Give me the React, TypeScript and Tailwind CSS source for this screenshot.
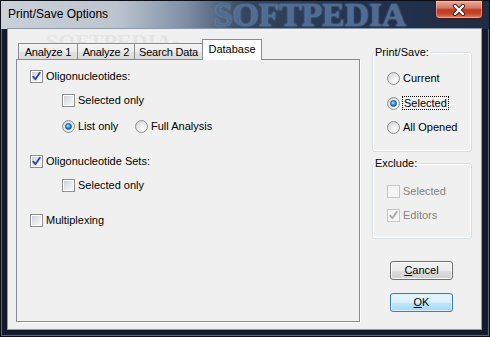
import React from "react";

const font = "font-['Liberation_Sans',Arial,sans-serif]";

function CheckBox({ checked, disabled }: { checked?: boolean; disabled?: boolean }) {
  return (
    <span
      className={
        "relative flex h-[13px] w-[13px] shrink-0 items-center justify-center border " +
        (disabled ? "border-[#c5c5c5] bg-[#f7f7f7]" : "border-[#8e8f8f] bg-white")
      }
    >
      <span
        className={
          "h-[9px] w-[9px] " +
          (disabled
            ? "bg-[#f4f4f4]"
            : "bg-[linear-gradient(135deg,#cdd1d7_0%,#e8e9eb_55%,#f8f8f8_100%)]")
        }
      />
      {checked && (
        <svg className="absolute left-0 top-0" width="11" height="11" viewBox="0 0 11 11">
          <path
            d="M2.2 5.6 L4.4 8.2 L8.8 1.8"
            fill="none"
            stroke={disabled ? "#a8a8a8" : "#2a43a8"}
            strokeWidth="1.8"
            strokeLinecap="round"
            strokeLinejoin="round"
          />
        </svg>
      )}
    </span>
  );
}

function Radio({ checked }: { checked?: boolean }) {
  return (
    <span className="flex h-[13px] w-[13px] shrink-0 items-center justify-center rounded-full border border-[#8e8f8f] bg-[radial-gradient(circle_at_65%_70%,#ffffff_0%,#e6e7e9_50%,#c9ccd1_100%)]">
      {checked && (
        <span className="h-[7px] w-[7px] rounded-full border border-[#1c4f8c] bg-[radial-gradient(circle_at_40%_35%,#bfeaff_0%,#2d96e0_45%,#0d4c97_100%)]" />
      )}
    </span>
  );
}

function Tab({ label, width, active }: { label: string; width: string; active?: boolean }) {
  if (active) {
    return (
      <div className={`-ml-px flex h-[21px] ${width} items-start justify-center border-x border-t border-[#898c95] bg-white pt-[3px] text-[11px] leading-[13px] text-black`}>
        {label}
      </div>
    );
  }
  return (
    <div className={`-ml-px mb-px flex h-[16px] ${width} items-center justify-center whitespace-nowrap border-x border-t border-[#898c95] bg-[linear-gradient(#f4f4f4,#ececec_50%,#e2e2e2_51%,#dcdcdc)] pt-[1px] text-[11px] leading-[13px] tracking-[-0.2px] text-black first:ml-0`}>
      {label}
    </div>
  );
}

export default function App() {
  return (
    <div className={`${font} relative flex h-[337px] w-[490px] flex-col overflow-hidden bg-[#131b2a] shadow-[inset_0_0_0_1px_#0a0f18,inset_0_0_0_2px_#5b6779,inset_0_0_0_3px_#18202f]`}>
      {/* Title bar */}
      <div className="relative flex h-[29px] shrink-0 items-start justify-between bg-[linear-gradient(90deg,#ccd1d8_0%,#bcc4cf_24%,#7d8ea5_38%,#34465f_50%,#223250_72%,#1f2c42_100%)] shadow-[inset_0_1px_0_#0a0f18,inset_1px_0_0_#0a0f18,inset_-1px_0_0_#0a0f18]">
        <span className="pointer-events-none absolute left-[214px] top-0 font-['Liberation_Serif',serif] text-[34px] font-bold leading-[29px] tracking-[-0.3px] text-[#4f6d93] [text-shadow:0_0_2px_#7f9ab8]">
          SOFTPEDIA
        </span>
        <span className="relative ml-[8px] mt-[7px] text-[12px] leading-[15px] text-black">
          Print/Save Options
        </span>
        <div className="relative mr-[7px] flex h-[19px] w-[48px] items-center justify-center rounded-b-[4px] rounded-t-[1px] border border-[#4a1a12] bg-[linear-gradient(#e9ad9c_0%,#d57a65_40%,#c23b22_52%,#c4442b_75%,#db8a6c_100%)] shadow-[inset_0_0_0_1px_rgba(255,210,195,0.45)]">
          <svg width="14" height="12" viewBox="0 0 14 12">
            <path d="M3 2 L11 10 M11 2 L3 10" stroke="#4b1e18" strokeWidth="4.2" strokeLinecap="round" />
            <path d="M3 2 L11 10 M11 2 L3 10" stroke="#ffffff" strokeWidth="2.4" strokeLinecap="round" />
          </svg>
        </div>
      </div>

      {/* Frame + client */}
      <div className="flex pl-[8px] pr-[9px]">
        <div className="relative flex h-[300px] w-[473px] bg-[#f0f0f0] shadow-[0_0_0_1px_#8e99a8]">
          {/* faint watermark */}
          <span className="pointer-events-none absolute left-[38px] top-[1px] font-['Liberation_Serif',serif] text-[22px] font-bold leading-[24px] text-[#e4e4e4]">
            SOFTPEDIA<sup className="text-[7px]">™</sup>
          </span>
          <span className="pointer-events-none absolute left-[80px] top-[31px] text-[9px] font-bold leading-[10px] text-[#e0e0e0]">
            www.softpedia.com
          </span>

          {/* Left: tab control */}
          <div className="relative flex flex-col pl-[8px] pt-[10px]">
            <div className="relative z-10 -mb-px flex h-[21px] items-end pl-[2px]">
              <Tab label="Analyze 1" width="w-[60px]" />
              <Tab label="Analyze 2" width="w-[58px]" />
              <Tab label="Search Data" width="w-[69px]" />
              <Tab label="Database" width="w-[60px]" active />
            </div>
            <div className="flex h-[263px] w-[344px] flex-col border border-[#898c95] bg-[#f0f0f0] pl-[13px] pt-[10px] text-[11px] leading-[13px] text-black shadow-[1px_1px_0_#ffffff]">
              <label className="flex items-center gap-[3px]">
                <CheckBox checked />
                <span>Oligonucleotides:</span>
              </label>
              <label className="ml-[32px] mt-[11px] flex items-center gap-[3px]">
                <CheckBox />
                <span>Selected only</span>
              </label>
              <div className="ml-[32px] mt-[13px] flex items-center">
                <label className="flex w-[73px] items-center gap-[3px]">
                  <Radio checked />
                  <span>List only</span>
                </label>
                <label className="flex items-center gap-[3px]">
                  <Radio />
                  <span>Full Analysis</span>
                </label>
              </div>
              <label className="mt-[22px] flex items-center gap-[3px]">
                <CheckBox checked />
                <span>Oligonucleotide Sets:</span>
              </label>
              <label className="ml-[32px] mt-[11px] flex items-center gap-[3px]">
                <CheckBox />
                <span>Selected only</span>
              </label>
              <label className="mt-[22px] flex items-center gap-[3px]">
                <CheckBox />
                <span>Multiplexing</span>
              </label>
            </div>
          </div>

          {/* Right column */}
          <div className="ml-[12px] flex flex-col pt-[17px] text-[11px] leading-[13px] text-black">
            <fieldset className="w-[100px] rounded-[3px] border border-[#d5dfe5] shadow-[inset_0_0_0_1px_#ffffff]">
              <legend className="ml-[1px] px-[1px]">Print/Save:</legend>
              <div className="flex flex-col gap-[11px] pb-[17px] pl-[14px] pt-[13px]">
                <label className="flex items-center gap-[3px]">
                  <Radio />
                  <span>Current</span>
                </label>
                <label className="flex items-center gap-[2px]">
                  <Radio checked />
                  <span className="border border-dotted border-black px-px leading-[12px]">Selected</span>
                </label>
                <label className="flex items-center gap-[3px]">
                  <Radio />
                  <span>All Opened</span>
                </label>
              </div>
            </fieldset>

            <fieldset className="mt-[5px] w-[100px] rounded-[3px] border border-[#d5dfe5] shadow-[inset_0_0_0_1px_#ffffff]">
              <legend className="ml-[1px] px-[1px]">Exclude:</legend>
              <div className="flex flex-col gap-[11px] pb-[16px] pl-[14px] pt-[15px] text-[#838383]">
                <label className="flex items-center gap-[3px]">
                  <CheckBox disabled />
                  <span>Selected</span>
                </label>
                <label className="flex items-center gap-[3px]">
                  <CheckBox checked disabled />
                  <span>Editors</span>
                </label>
              </div>
            </fieldset>

            <button className="ml-[18px] mt-[22px] flex h-[19px] w-[63px] items-center justify-center rounded-[3px] border border-[#707070] bg-[linear-gradient(#f2f2f2,#ebebeb_50%,#dddddd_51%,#cfcfcf)] shadow-[inset_0_0_0_1px_#fcfcfc] text-[11px] leading-[13px] text-black">
              <span>
                <span className="underline underline-offset-1">C</span>ancel
              </span>
            </button>
            <button className="ml-[18px] mt-[13px] flex h-[19px] w-[63px] items-center justify-center rounded-[3px] border border-[#3c7fb1] bg-[linear-gradient(#eaf6fd,#d9f0fc_50%,#bee6fd_51%,#a7d9f5)] shadow-[inset_0_0_0_1px_#d8f0fc] text-[11px] leading-[13px] text-black">
              <span>
                <span className="underline underline-offset-1">O</span>K
              </span>
            </button>
          </div>
        </div>
      </div>
    </div>
  );
}
